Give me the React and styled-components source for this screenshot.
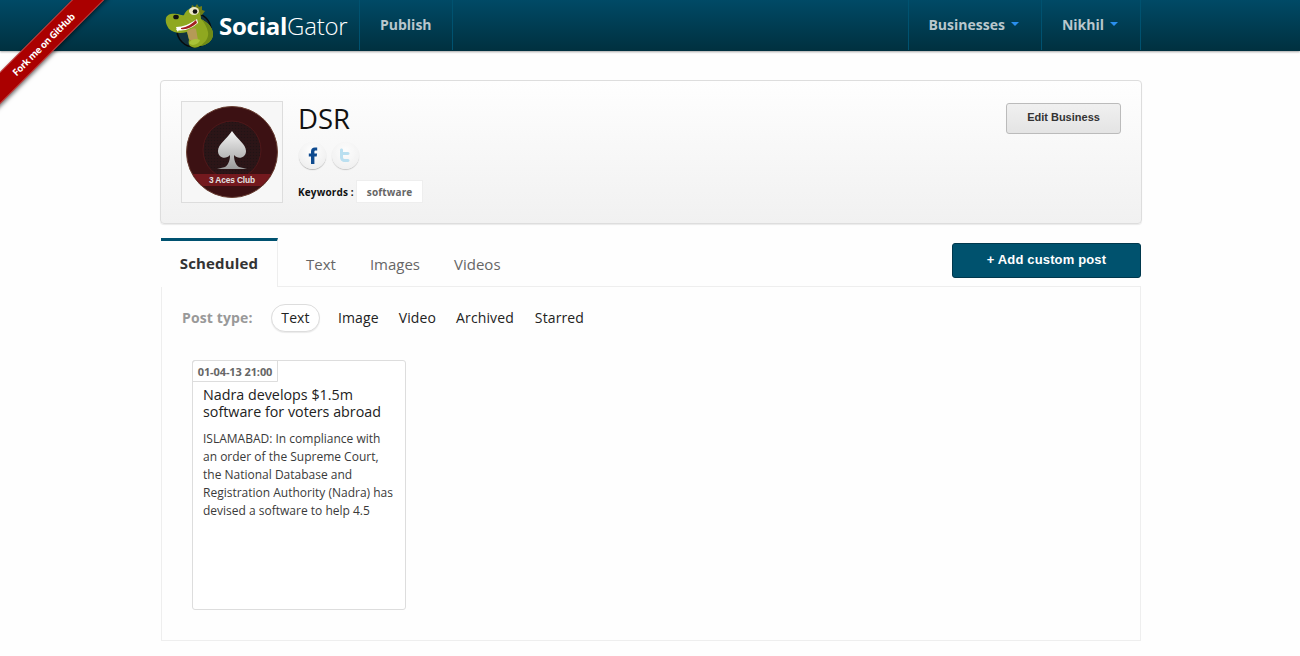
import React from "react";
import styled, { createGlobalStyle } from "styled-components";

const GlobalStyle = createGlobalStyle`
  html, body {
    margin: 0;
    padding: 0;
    background: #fefefe;
    font-family: "Open Sans", "Liberation Sans", sans-serif;
  }
  * { box-sizing: border-box; }
`;

const Page = styled.div`
  position: relative;
  height: 656px;
  overflow: hidden;
`;

const Ribbon = styled.a`
  position: absolute;
  left: -37px;
  top: 33px;
  width: 161px;
  height: 23px;
  transform: rotate(-45deg);
  background: #a00;
  border-top: 1px solid rgba(255, 255, 255, 0.25);
  border-bottom: 1px solid rgba(255, 255, 255, 0.25);
  box-shadow: 0 2px 4px rgba(0, 0, 0, 0.5);
  color: #fff;
  font-size: 9.5px;
  font-weight: 700;
  letter-spacing: -0.35px;
  line-height: 21px;
  text-align: center;
  z-index: 5;
`;

const Header = styled.header`
  height: 51px;
  background: linear-gradient(#004a66, #00303f);
  box-shadow: 0 1px 2px rgba(0, 0, 0, 0.35);
`;

const HeaderInner = styled.div`
  width: 981px;
  margin-left: 160px;
  height: 50px;
  display: flex;
`;

const Brand = styled.div`
  width: 199px;
  padding-left: 5px;
  display: flex;
  align-items: center;
  gap: 4px;
`;

const BrandName = styled.span`
  color: #fff;
  font-size: 24px;
  font-weight: 300;
  letter-spacing: -0.25px;
  b { font-weight: 700; }
`;

const NavItem = styled.div`
  display: flex;
  align-items: center;
  gap: 6px;
  padding: 0 ${(p) => p.$right}px 2px ${(p) => p.$left}px;
  border-left: 1px solid #005270;
  border-right: ${(p) => (p.$last ? "1px solid #005270" : "0")};
  color: #b9c7cd;
  font-size: 14px;
  font-weight: 700;
`;

const Caret = styled.i`
  width: 0;
  height: 0;
  margin-bottom: 1px;
  border-left: 4.5px solid transparent;
  border-right: 4.5px solid transparent;
  border-top: 4px solid #2a8fee;
`;

const Spacer = styled.div`
  flex: 1;
  border-left: 1px solid #005270;
`;

const Main = styled.main`
  width: 982px;
  margin: 29px 0 0 160px;
`;

const BusinessCard = styled.section`
  height: 144px;
  padding: 20px;
  display: flex;
  border: 1px solid #ddd;
  border-radius: 4px;
  background: linear-gradient(#fefefe, #f1f1f1);
  box-shadow: 0 1px 1px rgba(0, 0, 0, 0.08);
`;

const Avatar = styled.div`
  width: 102px;
  height: 102px;
  padding: 4px;
  border: 1px solid #ddd;
  background: #f7f7f7;
  svg { display: block; }
`;

const Info = styled.div`
  flex: 1;
  margin-left: 15px;
`;

const Title = styled.h1`
  margin: 0;
  font-size: 27.5px;
  font-weight: 400;
  line-height: 36px;
  color: #111;
`;

const SocialRow = styled.div`
  display: flex;
  gap: 6px;
  margin: 5px 0 0 1px;
`;

const SocialIcon = styled.div`
  width: 27px;
  height: 27px;
  border-radius: 50%;
  background: radial-gradient(circle at 50% 35%, #fff, #eaeaea);
  box-shadow: 0 1px 1px rgba(0, 0, 0, 0.25);
  display: flex;
  align-items: center;
  justify-content: center;
  opacity: ${(p) => (p.$faded ? 0.75 : 1)};
  svg { display: block; }
`;

const KeywordRow = styled.div`
  display: flex;
  align-items: center;
  margin-top: 11px;
  font-size: 10px;
  font-weight: 700;
  letter-spacing: 0.15px;
  color: #111;
`;

const Chip = styled.span`
  height: 23px;
  margin-left: 2px;
  padding: 0 10px;
  display: flex;
  align-items: center;
  background: #fff;
  border: 1px solid #eee;
  color: #666;
`;

const EditButton = styled.button`
  width: 115px;
  height: 31px;
  margin-top: 2px;
  padding: 0 0 3px;
  border: 1px solid #bbb;
  border-radius: 3px;
  background: linear-gradient(#f0f0f0, #e4e4e4);
  color: #333;
  font-family: "Liberation Sans", sans-serif;
  font-size: 11px;
  font-weight: 700;
`;

const TabBar = styled.div`
  height: 48px;
  margin: 14px 1px 0 1px;
  display: flex;
  align-items: flex-start;
`;

const ActiveTab = styled.div`
  width: 117px;
  height: 49px;
  padding-top: 12px;
  border-top: 3px solid #005270;
  border-right: 1px solid #eee;
  background: #fefefe;
  color: #333;
  font-size: 15px;
  font-weight: 700;
  letter-spacing: 0.15px;
  line-height: 20px;
  text-align: center;
  position: relative;
  z-index: 1;
`;

const Tab = styled.div`
  margin: 16px 0 0 ${(p) => p.$gap}px;
  color: #666;
  font-size: 15px;
  line-height: 20px;
`;

const AddButton = styled.button`
  width: 189px;
  height: 35px;
  margin: 5px 0 0 auto;
  padding: 0 0 2px;
  border: 1px solid #00384d;
  border-radius: 3px;
  background: #00526e;
  color: #fff;
  font-family: "Liberation Sans", sans-serif;
  font-size: 13px;
  font-weight: 700;
  letter-spacing: 0.15px;
`;

const Panel = styled.section`
  height: 355px;
  margin: 0 1px;
  padding: 17px 20px 0 30px;
  border: 1px solid #eee;
`;

const FilterRow = styled.div`
  display: flex;
  align-items: center;
  height: 28px;
  padding-bottom: 1px;
  font-size: 14px;
  letter-spacing: 0.12px;
  color: #222;
`;

const FilterLabel = styled.span`
  width: 89px;
  margin-left: -10px;
  color: #999;
  font-weight: 700;
`;

const Filter = styled.span`
  margin-right: ${(p) => p.$gap}px;
`;

const FilterPill = styled.span`
  width: 49px;
  height: 28px;
  margin: 1px 18px 0 0;
  padding-bottom: 1px;
  border: 1px solid #ddd;
  border-radius: 14px;
  background: #fff;
  box-shadow: 0 1px 1px rgba(0, 0, 0, 0.08);
  display: flex;
  align-items: center;
  justify-content: center;
`;

const PostCard = styled.article`
  width: 214px;
  height: 250px;
  margin-top: 28px;
  border: 1px solid #ddd;
  border-radius: 3px;
  background: #fff;
`;

const DateTag = styled.div`
  width: 86px;
  height: 22px;
  margin: -1px 0 0 -1px;
  border: 1px solid #ddd;
  border-radius: 3px 0 0 0;
  color: #666;
  font-size: 11px;
  font-weight: 700;
  letter-spacing: -0.1px;
  line-height: 21px;
  text-align: center;
`;

const PostTitle = styled.h3`
  margin: 4px 0 0 10px;
  color: #222;
  font-size: 14.3px;
  font-weight: 400;
  line-height: 17px;
`;

const PostBody = styled.p`
  margin: 10px 10px 0 10px;
  color: #3a3a3a;
  font-size: 12px;
  line-height: 18px;
`;

const GatorLogo = () => (
  <svg width="50" height="50" viewBox="0 0 50 50">
    <circle cx="29" cy="30" r="17" fill="#12323f" stroke="#070b0d" strokeWidth="1.5" />
    <path d="M26 9l1-4 3 2 2-3 2 3 3-1 0 4 3 1-3 4-10-2z" fill="#6d7d18" />
    <path d="M1 18c1-4 6-5 11-4 3 0 5 2 7 1 2-5 7-8 12-6 4 2 5 6 5 10 6 3 12 8 12 15 0 7-6 11-13 12-3 2-6 2-8 1-3-1-4-4-3-7l-2-8c-7 2-13 1-18-3-2-3-4-7-3-11z" fill="#8fa820" />
    <path d="M36 19c6 3 12 8 12 15 0 7-6 11-13 12 6-4 9-9 8-14-1-5-4-10-7-13z" fill="#6f8a16" />
    <path d="M11 27c7 0 14-3 21-8l1 4c-6 5-14 9-21 7z" fill="#fff" />
    <path d="M16 28c6-1 11-4 15-8l1 3c-5 4-10 7-16 6z" fill="#a32020" />
    <path d="M22 31c3-2 7-4 9-2l2 11c-3 2-7 1-9-1z" fill="#b59a56" />
    <path d="M24 43c2-4 7-5 11-3-1 4-8 7-11 3z" fill="#a9c238" />
    <ellipse cx="29" cy="11" rx="5" ry="4" fill="#ece9c6" />
    <circle cx="30" cy="11.5" r="2.3" fill="#111" />
    <ellipse cx="11" cy="17" rx="2.8" ry="2.3" fill="#111" />
    <path d="M11 29l2 3 1-3z" fill="#fff" />
  </svg>
);

const ClubLogo = () => (
  <svg width="92" height="92" viewBox="0 0 92 92">
    <defs>
      <linearGradient id="spade" x1="0" y1="0" x2="0" y2="1">
        <stop offset="0" stopColor="#f4f4f4" />
        <stop offset="1" stopColor="#9c9c9c" />
      </linearGradient>
      <pattern id="mesh" width="3" height="3" patternUnits="userSpaceOnUse">
        <rect width="3" height="3" fill="#2c1517" />
        <circle cx="1.5" cy="1.5" r="0.8" fill="#211315" />
      </pattern>
      <clipPath id="disc">
        <circle cx="46" cy="46" r="45" />
      </clipPath>
    </defs>
    <circle cx="46" cy="46" r="45.5" fill="#3c1113" stroke="#6a4034" />
    <circle cx="46" cy="44" r="29" fill="url(#mesh)" stroke="#4f1719" />
    <path d="M46 25c5 8 14 13 14 20 0 7-8 9-12 4 0 6 2 10 5 12l8 2H31l8-2c3-2 5-6 5-12-4 5-12 3-12-4 0-7 9-12 14-20z" fill="url(#spade)" />
    <rect x="0" y="68" width="92" height="12" fill="#74191e" clipPath="url(#disc)" />
    <text x="46" y="77" textAnchor="middle" fill="#e4e4e4" fontFamily="'Liberation Sans', sans-serif" fontSize="8.4" fontWeight="700" letterSpacing="-0.15">3 Aces Club</text>
  </svg>
);

const FacebookIcon = () => (
  <svg width="10" height="17" viewBox="0 0 10 17">
    <path d="M3 17V9.5H.8V6.6H3V4.5C3 1.9 4.5.6 6.8.6h2.4v2.9H7.7c-1 0-1.3.5-1.3 1.2v1.9h2.7l-.4 2.9H6.4V17z" fill="#0f4b8f" />
  </svg>
);

const TwitterIcon = () => (
  <svg width="13" height="15" viewBox="0 0 13 15">
    <path d="M1 2c0-2 3-2 3 0v2h5c2 0 2 3 0 3H4v2c0 2 1 2 3 2h2c2 0 2 3 0 3H6c-3 0-5-2-5-5z" fill="#a6d8ee" />
  </svg>
);

export default function App() {
  return (
    <Page>
      <GlobalStyle />
      <Ribbon>Fork me on GitHub</Ribbon>
      <Header>
        <HeaderInner>
          <Brand>
            <GatorLogo />
            <BrandName>
              <b>Social</b>Gator
            </BrandName>
          </Brand>
          <NavItem $left={20} $right={20}>Publish</NavItem>
          <Spacer />
          <NavItem $left={19} $right={22}>
            Businesses <Caret />
          </NavItem>
          <NavItem $left={20} $right={22} $last>
            Nikhil <Caret />
          </NavItem>
        </HeaderInner>
      </Header>
      <Main>
        <BusinessCard>
          <Avatar>
            <ClubLogo />
          </Avatar>
          <Info>
            <Title>DSR</Title>
            <SocialRow>
              <SocialIcon>
                <FacebookIcon />
              </SocialIcon>
              <SocialIcon $faded>
                <TwitterIcon />
              </SocialIcon>
            </SocialRow>
            <KeywordRow>
              Keywords :<Chip>software</Chip>
            </KeywordRow>
          </Info>
          <EditButton>Edit Business</EditButton>
        </BusinessCard>
        <TabBar>
          <ActiveTab>Scheduled</ActiveTab>
          <Tab $gap={28}>Text</Tab>
          <Tab $gap={34}>Images</Tab>
          <Tab $gap={34}>Videos</Tab>
          <AddButton>+ Add custom post</AddButton>
        </TabBar>
        <Panel>
          <FilterRow>
            <FilterLabel>Post type:</FilterLabel>
            <FilterPill>Text</FilterPill>
            <Filter $gap={20}>Image</Filter>
            <Filter $gap={20}>Video</Filter>
            <Filter $gap={21}>Archived</Filter>
            <Filter $gap={0}>Starred</Filter>
          </FilterRow>
          <PostCard>
            <DateTag>01-04-13 21:00</DateTag>
            <PostTitle>Nadra develops $1.5m software for voters abroad</PostTitle>
            <PostBody>
              ISLAMABAD: In compliance with an order of the Supreme Court, the National Database and Registration
              Authority (Nadra) has devised a software to help 4.5
            </PostBody>
          </PostCard>
        </Panel>
      </Main>
    </Page>
  );
}
